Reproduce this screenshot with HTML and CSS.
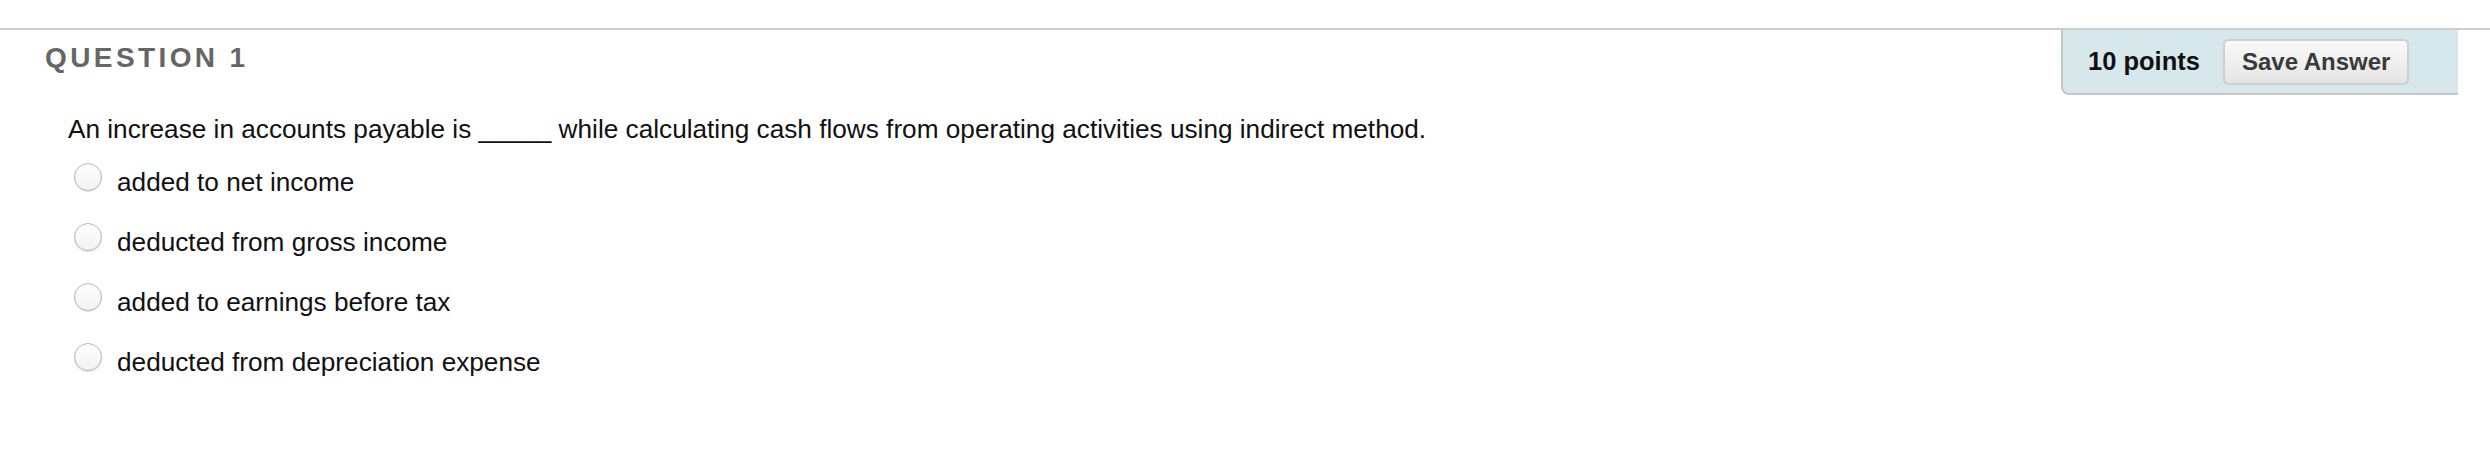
FILE: index.html
```html
<!DOCTYPE html>
<html lang="en">
<head>
    <meta charset="UTF-8">
    <meta name="viewport" content="width=device-width, initial-scale=1.0">
    <title>Question 1</title>
    <link rel="stylesheet" href="styles.css">
</head>
<body>
    <div class="question">
        <div class="q-header">
            <h3 class="q-title">QUESTION 1</h3>
            <div class="q-points">
                <span class="points">10 points</span>
                <button class="save">Save Answer</button>
            </div>
        </div>
        <div class="q-body">
            <p class="q-text">An increase in accounts payable is _____ while calculating cash flows from operating activities using indirect method.</p>
            <div class="options">
                <label class="option"><input type="radio" name="q1"><span>added to net income</span></label>
                <label class="option"><input type="radio" name="q1"><span>deducted from gross income</span></label>
                <label class="option"><input type="radio" name="q1"><span>added to earnings before tax</span></label>
                <label class="option"><input type="radio" name="q1"><span>deducted from depreciation expense</span></label>
            </div>
        </div>
    </div>
</body>
</html>
```

FILE: styles.css
```css
body {
    margin: 0;
    background: #ffffff;
    font-family: "Liberation Sans", Arial, sans-serif;
    color: #111;
}
.question {
    padding-top: 28px;
}
.q-header {
    display: flex;
    justify-content: space-between;
    align-items: flex-start;
    border-top: 2px solid #cdcdcd;
}
.q-title {
    margin: 0;
    padding: 14px 0 0 45px;
    font-size: 28px;
    line-height: 28px;
    font-weight: bold;
    letter-spacing: 3.4px;
    color: #666;
}
.q-points {
    display: flex;
    align-items: center;
    gap: 23px;
    width: 370px;
    height: 63px;
    margin-right: 32px;
    padding-left: 25px;
    background: #d6e8ec;
    border-left: 2px solid #c6c6c6;
    border-bottom: 2px solid #c6c6c6;
    border-bottom-left-radius: 8px;
}
.points {
    font-size: 25.5px;
    font-weight: bold;
    color: #111;
}
.save {
    height: 46px;
    padding: 0 17px;
    font-family: inherit;
    font-size: 24px;
    font-weight: bold;
    color: #3a3a3a;
    background: linear-gradient(#fafafa, #e4e4e4);
    border: 2px solid #cfcfcf;
    border-radius: 5px;
    cursor: pointer;
}
.q-text {
    margin: 20px 0 0;
    padding-left: 68px;
    font-size: 26.2px;
    line-height: 28px;
}
.options {
    display: flex;
    flex-direction: column;
    gap: 27px;
    margin-top: 20px;
    padding-left: 74px;
}
.option {
    display: flex;
    align-items: flex-start;
    gap: 15px;
    font-size: 26.2px;
    line-height: 28px;
}
.option span {
    padding-top: 5px;
}
.option input {
    appearance: none;
    -webkit-appearance: none;
    width: 28px;
    height: 28px;
    margin: 0;
    border-radius: 50%;
    border: 1px solid #b4b4b4;
    background: linear-gradient(#ffffff, #f1f1f1);
    box-shadow: 0 1px 1px rgba(0, 0, 0, 0.12);
}
```
